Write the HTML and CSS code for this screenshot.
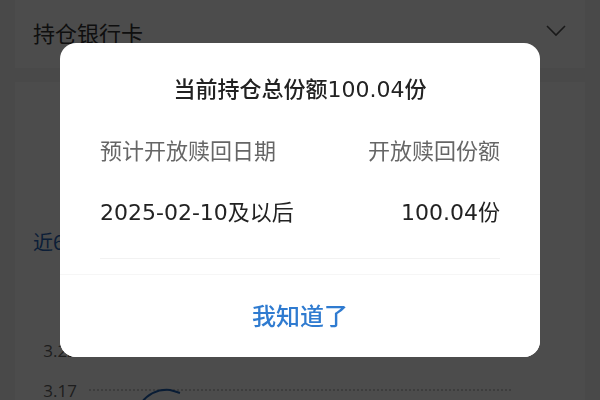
FILE: index.html
```html
<!DOCTYPE html>
<html lang="zh-CN">
<head>
<meta charset="UTF-8">
<meta name="viewport" content="width=device-width, initial-scale=1.0">
<title>持仓份额</title>
<link rel="stylesheet" href="styles.css">
</head>
<body>

<div class="page">
<div class="card card-bank">
<span class="card-title">持仓银行卡</span>
<svg class="chevron" width="20" height="12" viewBox="0 0 20 12"><path d="M1 1 L10 10 L19 1" fill="none" stroke="#555" stroke-width="1.6"/></svg>
</div>

<div class="card card-chart">
<div class="chart-title">近6个月净值走势</div>
<div class="chart">
<div class="axis-row"><span class="axis-label">3.22</span><span class="grid-line"></span></div>
<div class="axis-row"><span class="axis-label">3.17</span><span class="grid-line"></span></div>
<svg class="curve" width="50" height="20" viewBox="0 0 50 20"><path d="M1 16 C9 6 19 2 30 3 C34 4 37 5 40 6" fill="none" stroke="#1f5fb0" stroke-width="2"/></svg>
</div>
</div>
</div>

<div class="mask"></div>

<div class="dialog">
<h3 class="dialog-title">当前持仓总份额100.04份</h3>
<div class="dialog-table">
<div class="row row-head">
<span>预计开放赎回日期</span>
<span>开放赎回份额</span>
</div>
<div class="row row-value">
<span>2025-02-10及以后</span>
<span>100.04份</span>
</div>
</div>
<div class="divider"></div>
<button class="dialog-btn">我知道了</button>
</div>

</body>
</html>
```

FILE: styles.css
```css
body {
    margin: 0;
    padding: 0;
    background-color: #f5f5f5;
    font-family: "Noto Sans CJK SC", sans-serif;
    overflow: hidden;
}

.page {
    padding: 0 15px;
}

.card {
    background-color: #fff;
}

.card-bank {
    height: 68px;
    display: flex;
    align-items: center;
    justify-content: space-between;
    padding: 0 18px;
    box-sizing: border-box;
}

.card-title {
    font-size: 22px;
    color: #333;
    margin-top: -4px;
}

.chevron {
    margin-right: 1px;
    margin-top: -6px;
}

.card-chart {
    margin-top: 14px;
    height: 340px;
    padding: 145px 18px 0;
    box-sizing: border-box;
}

.chart-title {
    font-size: 20px;
    color: #2a66b8;
    line-height: 30px;
}

.chart {
    position: relative;
    margin-top: 73px;
}

.axis-row {
    display: flex;
    align-items: center;
    height: 40px;
}

.axis-label {
    width: 44px;
    text-align: right;
    font-size: 17px;
    color: #666;
    font-family: "Open Sans", sans-serif;
}

.grid-line {
    flex: 1;
    margin: 0 56px 0 12px;
    border-top: 2px dotted #ccc;
}

.curve {
    position: absolute;
    left: 107px;
    top: 57px;
}

.mask {
    position: fixed;
    left: 0;
    top: 0;
    right: 0;
    bottom: 0;
    background-color: rgba(0, 0, 0, 0.7);
}

.dialog {
    position: fixed;
    left: 60px;
    top: 43px;
    width: 480px;
    height: 314px;
    background-color: #fff;
    border-radius: 16px;
    display: flex;
    flex-direction: column;
    overflow: hidden;
}

.dialog-title {
    margin: 30px 0 0;
    font-family: "DejaVu Sans", "Noto Sans CJK SC", sans-serif;
    font-size: 22px;
    font-weight: 500;
    line-height: 34px;
    text-align: center;
    color: #222;
}

.dialog-table {
    padding: 0 40px;
    margin-top: 25px;
    display: flex;
    flex-direction: column;
    gap: 30px;
}

.row {
    display: flex;
    justify-content: space-between;
    font-size: 22px;
    line-height: 34px;
}

.row-head {
    color: #666;
}

.row-value {
    color: #222;
    font-family: "DejaVu Sans", "Noto Sans CJK SC", sans-serif;
}

.divider {
    margin: 28px 40px 0;
    border-top: 1px solid #f2f2f2;
}

.dialog-btn {
    margin-top: 15px;
    flex: 1;
    border: none;
    border-top: 1px solid #f6f6f6;
    background-color: #fff;
    color: #2f7bd0;
    font-size: 24px;
    font-weight: 500;
    font-family: "Noto Sans CJK SC", sans-serif;
    cursor: pointer;
    padding: 0 0 4px;
}
```
